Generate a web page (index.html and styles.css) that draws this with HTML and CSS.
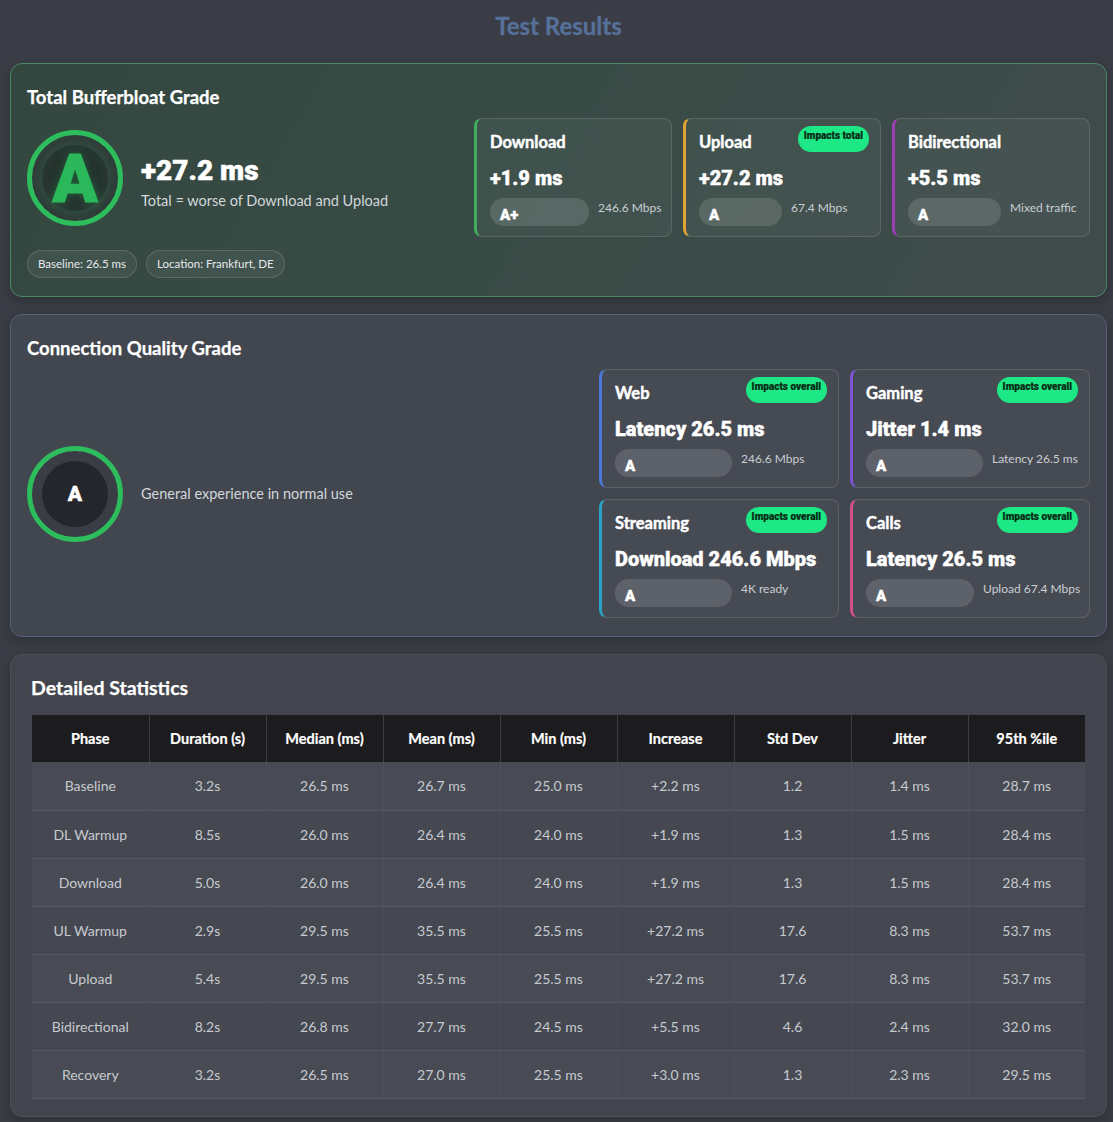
FILE: index.html
```html
<!DOCTYPE html>
<html lang="en">
<head>
<meta charset="utf-8">
<title>Test Results</title>
<link rel="stylesheet" href="styles.css">
</head>
<body>
<div class="page">
  <h1 class="page-title">Test Results</h1>

  <section class="card card-bloat">
    <h2 class="card-title">Total Bufferbloat Grade</h2>
    <div class="card-row">
      <div class="grade-main">
        <div class="ring ring-glow"><div class="ring-inner glow-inner"><span class="big-a">A</span></div></div>
        <div class="grade-text">
          <div class="grade-value">+27.2 ms</div>
          <div class="grade-desc">Total = worse of Download and Upload</div>
        </div>
      </div>
      <div class="tiles tiles-3">
        <div class="tile tile-green">
          <div class="tile-head"><span class="tile-name">Download</span></div>
          <div class="tile-value">+1.9 ms</div>
          <div class="tile-foot"><span class="pill" style="width:99px">A+</span><span class="tile-side">246.6 Mbps</span></div>
        </div>
        <div class="tile tile-orange">
          <div class="tile-head"><span class="tile-name">Upload</span><span class="badge">Impacts total</span></div>
          <div class="tile-value">+27.2 ms</div>
          <div class="tile-foot"><span class="pill" style="width:83px">A</span><span class="tile-side">67.4 Mbps</span></div>
        </div>
        <div class="tile tile-purple">
          <div class="tile-head"><span class="tile-name">Bidirectional</span></div>
          <div class="tile-value">+5.5 ms</div>
          <div class="tile-foot"><span class="pill" style="width:93px">A</span><span class="tile-side">Mixed traffic</span></div>
        </div>
      </div>
    </div>
    <div class="chips">
      <span class="chip">Baseline: 26.5 ms</span>
      <span class="chip">Location: Frankfurt, DE</span>
    </div>
  </section>

  <section class="card card-quality">
    <h2 class="card-title">Connection Quality Grade</h2>
    <div class="card-row">
      <div class="grade-main">
        <div class="ring"><div class="ring-inner dark-inner"><span class="small-a">A</span></div></div>
        <div class="grade-desc">General experience in normal use</div>
      </div>
      <div class="tiles tiles-2">
        <div class="tile tile-blue">
          <div class="tile-head"><span class="tile-name">Web</span><span class="badge">Impacts overall</span></div>
          <div class="tile-value">Latency 26.5 ms</div>
          <div class="tile-foot"><span class="pill" style="width:117px">A</span><span class="tile-side">246.6 Mbps</span></div>
        </div>
        <div class="tile tile-violet">
          <div class="tile-head"><span class="tile-name">Gaming</span><span class="badge">Impacts overall</span></div>
          <div class="tile-value">Jitter 1.4 ms</div>
          <div class="tile-foot"><span class="pill" style="width:117px">A</span><span class="tile-side">Latency 26.5 ms</span></div>
        </div>
        <div class="tile tile-teal">
          <div class="tile-head"><span class="tile-name">Streaming</span><span class="badge">Impacts overall</span></div>
          <div class="tile-value">Download 246.6 Mbps</div>
          <div class="tile-foot"><span class="pill" style="width:117px">A</span><span class="tile-side">4K ready</span></div>
        </div>
        <div class="tile tile-pink">
          <div class="tile-head"><span class="tile-name">Calls</span><span class="badge">Impacts overall</span></div>
          <div class="tile-value">Latency 26.5 ms</div>
          <div class="tile-foot"><span class="pill" style="width:108px">A</span><span class="tile-side">Upload 67.4 Mbps</span></div>
        </div>
      </div>
    </div>
  </section>

  <section class="card card-stats">
    <h2 class="stats-title">Detailed Statistics</h2>
    <table class="stats">
      <thead>
        <tr><th>Phase</th><th>Duration (s)</th><th>Median (ms)</th><th>Mean (ms)</th><th>Min (ms)</th><th>Increase</th><th>Std Dev</th><th>Jitter</th><th>95th %ile</th></tr>
      </thead>
      <tbody>
        <tr><td>Baseline</td><td>3.2s</td><td>26.5 ms</td><td>26.7 ms</td><td>25.0 ms</td><td>+2.2 ms</td><td>1.2</td><td>1.4 ms</td><td>28.7 ms</td></tr>
        <tr><td>DL Warmup</td><td>8.5s</td><td>26.0 ms</td><td>26.4 ms</td><td>24.0 ms</td><td>+1.9 ms</td><td>1.3</td><td>1.5 ms</td><td>28.4 ms</td></tr>
        <tr><td>Download</td><td>5.0s</td><td>26.0 ms</td><td>26.4 ms</td><td>24.0 ms</td><td>+1.9 ms</td><td>1.3</td><td>1.5 ms</td><td>28.4 ms</td></tr>
        <tr><td>UL Warmup</td><td>2.9s</td><td>29.5 ms</td><td>35.5 ms</td><td>25.5 ms</td><td>+27.2 ms</td><td>17.6</td><td>8.3 ms</td><td>53.7 ms</td></tr>
        <tr><td>Upload</td><td>5.4s</td><td>29.5 ms</td><td>35.5 ms</td><td>25.5 ms</td><td>+27.2 ms</td><td>17.6</td><td>8.3 ms</td><td>53.7 ms</td></tr>
        <tr><td>Bidirectional</td><td>8.2s</td><td>26.8 ms</td><td>27.7 ms</td><td>24.5 ms</td><td>+5.5 ms</td><td>4.6</td><td>2.4 ms</td><td>32.0 ms</td></tr>
        <tr><td>Recovery</td><td>3.2s</td><td>26.5 ms</td><td>27.0 ms</td><td>25.5 ms</td><td>+3.0 ms</td><td>1.3</td><td>2.3 ms</td><td>29.5 ms</td></tr>
      </tbody>
    </table>
  </section>
</div>
</body>
</html>
```

FILE: styles.css
```css
* { box-sizing: border-box; }
html, body { margin: 0; padding: 0; }
body {
  background: #3a3d45;
  font-family: Lato, "Open Sans", sans-serif;
  color: #ffffff;
}
.page {
  padding: 0 6px 7px 10px;
}
.page-title {
  margin: 0;
  height: 63px;
  padding-top: 10px;
  line-height: 32px;
  font-size: 24px;
  font-weight: 700;
  text-align: center;
  color: #56709a;
  -webkit-text-stroke: 0.3px #56709a;
}
.card {
  border-radius: 12px;
  border: 1px solid #4d5058;
  box-shadow: 0 4px 12px rgba(0, 0, 0, 0.22);
  margin-bottom: 17px;
}
.card-bloat {
  background: linear-gradient(120deg, #33473f 0%, #394b46 50%, #3f4b4b 100%);
  border-color: #4a8862;
  padding: 21px 16px 18px 16px;
}
.card-quality {
  background: #42464f;
  border-color: #555e7a;
  padding: 21px 16px 18px 16px;
}
.card-stats {
  background: #42454d;
  border-color: #4c4f57;
  padding: 20px 21px 17px 21px;
  margin-bottom: 0;
}
.card-title {
  margin: 0;
  font-size: 18.5px;
  line-height: 24px;
  font-weight: 700;
  color: #ffffff;
  -webkit-text-stroke: 0.25px #ffffff;
}
.stats-title {
  margin: 0 0 14px -1px;
  font-size: 19.5px;
  line-height: 26px;
  font-weight: 700;
  -webkit-text-stroke: 0.25px #ffffff;
}
.card-row {
  display: flex;
  align-items: center;
  justify-content: space-between;
  margin-top: 9px;
}
.grade-main {
  display: flex;
  align-items: center;
  gap: 18px;
}
.ring {
  width: 96px;
  height: 96px;
  border-radius: 50%;
  border: 5px solid #2dbd5d;
  padding: 10px;
  background: #3a3d45;
  flex: none;
}
.ring-glow {
  background: #303d3a;
}
.ring-inner {
  width: 66px;
  height: 66px;
  border-radius: 50%;
  display: flex;
  align-items: center;
  justify-content: center;
}
.glow-inner {
  background: radial-gradient(circle, #1d2824 0%, #25332f 55%, #2f3f3a 100%);
  box-shadow: 0 0 10px rgba(45, 189, 93, 0.25);
}
.dark-inner {
  background: #25262b;
}
.big-a {
  font-family: Roboto, Lato, sans-serif;
  font-weight: 900;
  font-size: 67px;
  line-height: 1;
  color: #2bb85b;
  -webkit-text-stroke: 1px #2bb85b;
  text-shadow: 0 0 10px rgba(43, 184, 91, 0.45);
  margin-top: 4px;
}
.small-a {
  font-family: Roboto, Lato, sans-serif;
  font-weight: 900;
  font-size: 21px;
  color: #ffffff;
  -webkit-text-stroke: 0.4px #ffffff;
}
.grade-text {
  display: flex;
  flex-direction: column;
  gap: 4px;
  padding-top: 10px;
}
.grade-value {
  font-family: Roboto, Lato, sans-serif;
  font-weight: 900;
  font-size: 28px;
  line-height: 32px;
  -webkit-text-stroke: 0.5px #ffffff;
}
.grade-desc {
  font-size: 14.5px;
  line-height: 20px;
  color: #d3d7dc;
}
.tiles {
  display: grid;
  gap: 11px;
}
.tiles-3 {
  grid-template-columns: repeat(3, 198px);
}
.tiles-2 {
  grid-template-columns: repeat(2, 240px);
}
.tile {
  border: 1px solid rgba(255, 255, 255, 0.12);
  border-left-width: 3px;
  border-radius: 8px;
  background: rgba(255, 255, 255, 0.04);
  padding: 10px 11px 10px 13px;
  height: 119px;
}
.card-quality .tile {
  background: rgba(255, 255, 255, 0.025);
}
.tile-green { border-left-color: #3fae5c; }
.tile-orange { border-left-color: #e0a336; }
.tile-purple { border-left-color: #9b3fb5; }
.tile-blue { border-left-color: #4a78d6; }
.tile-violet { border-left-color: #7b55d6; }
.tile-teal { border-left-color: #28a3c4; }
.tile-pink { border-left-color: #d2508c; }
.tile-head {
  display: flex;
  align-items: center;
  justify-content: space-between;
  min-height: 26px;
}
.tile-name {
  font-weight: 700;
  font-size: 16.5px;
  line-height: 20px;
  -webkit-text-stroke: 0.45px #ffffff;
}
.badge {
  font-family: Roboto, Lato, sans-serif;
  background: #1ee885;
  color: #062e17;
  font-weight: 900;
  font-size: 10px;
  height: 26px;
  padding: 3px 6px 0 6px;
  border-radius: 13px;
  margin-top: -7px;
  line-height: 14px;
  -webkit-text-stroke: 0.2px #062e17;
}
.tile-value {
  margin-top: 10px;
  font-family: Roboto, Lato, sans-serif;
  font-weight: 900;
  font-size: 20px;
  line-height: 26px;
  white-space: nowrap;
  -webkit-text-stroke: 0.4px #ffffff;
}
.tile-foot {
  display: flex;
  align-items: flex-start;
  gap: 9px;
  margin-top: 7px;
}
.pill {
  flex: none;
  height: 28px;
  border-radius: 14px;
  background: rgba(255, 255, 255, 0.13);
  padding: 6px 0 0 10px;
  font-family: Roboto, Lato, sans-serif;
  font-weight: 900;
  font-size: 15px;
  line-height: 22px;
  -webkit-text-stroke: 0.4px #ffffff;
}
.tile-side {
  font-size: 12px;
  line-height: 16px;
  color: #c9ced3;
  white-space: nowrap;
  margin-top: 2px;
}
.chips {
  display: flex;
  gap: 9px;
  margin-top: 13px;
}
.chip {
  height: 28px;
  line-height: 26px;
  padding: 0 10px;
  border-radius: 14px;
  border: 1px solid rgba(255, 255, 255, 0.14);
  background: rgba(255, 255, 255, 0.06);
  font-size: 11.5px;
  color: #e6e9ec;
}
.stats {
  width: 100%;
  border-collapse: collapse;
  table-layout: fixed;
  font-size: 14px;
}
.stats th {
  background: #1c1c1e;
  color: #ffffff;
  font-weight: 700;
  font-size: 14.5px;
  height: 47px;
  border-left: 1px solid #3e3e42;
  text-align: center;
  padding: 0;
  -webkit-text-stroke: 0.2px #ffffff;
}
.stats th:first-child { border-left: none; }
.stats td {
  height: 48px;
  text-align: center;
  color: #c6cad0;
  border-bottom: 1px solid #555861;
  border-left: 1px solid rgba(255, 255, 255, 0.03);
  padding: 0;
}
.stats td:first-child { border-left: none; }
.stats tbody tr {
  background: rgba(255, 255, 255, 0.02);
}
.stats tbody tr:nth-child(odd) {
  background: rgba(255, 255, 255, 0.035);
}
```
